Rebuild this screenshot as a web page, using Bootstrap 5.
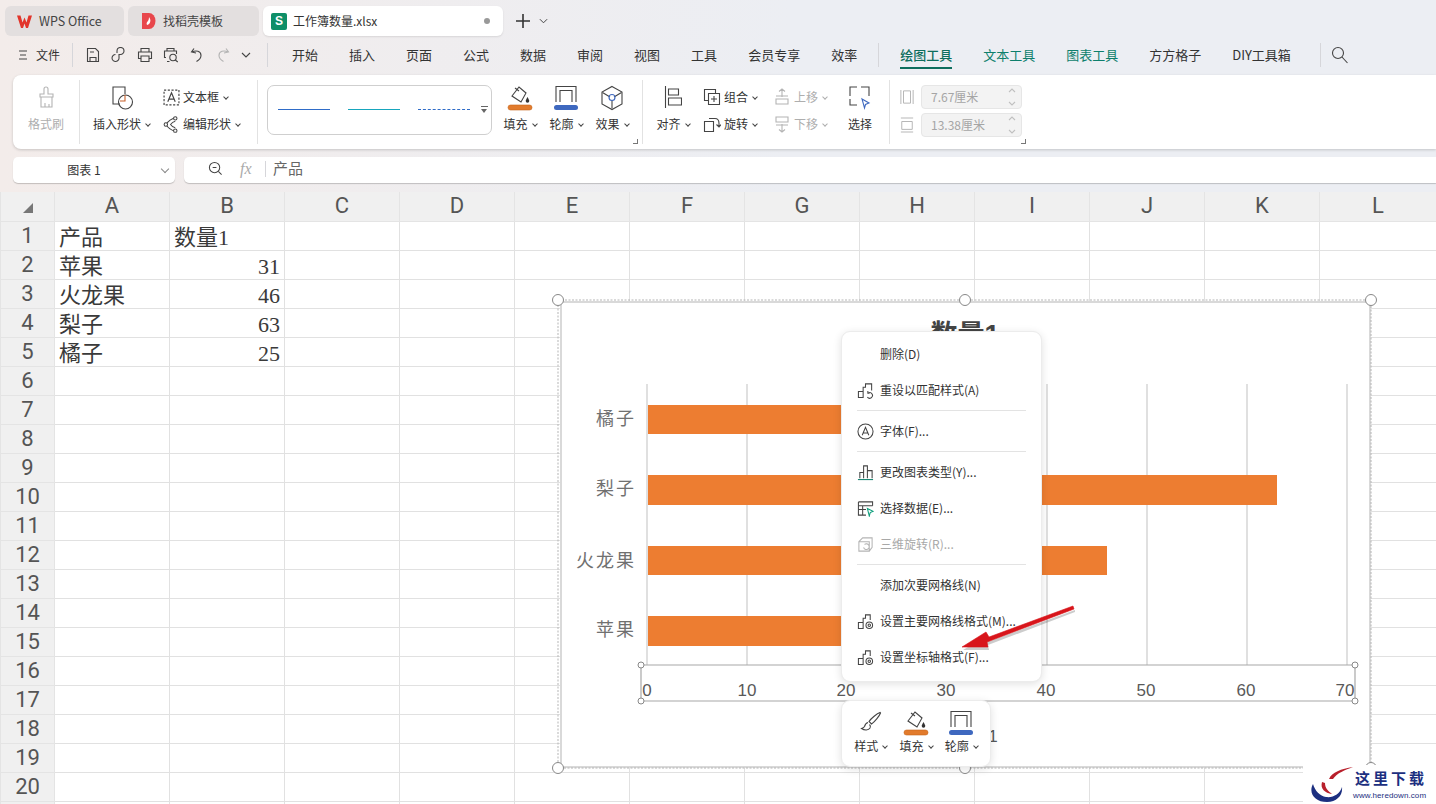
<!DOCTYPE html>
<html lang="zh-CN">
<head>
<meta charset="UTF-8">
<title>工作簿数量.xlsx - WPS Office</title>
<link href="https://cdn.jsdelivr.net/npm/bootstrap@5.3.3/dist/css/bootstrap.min.css" rel="stylesheet">
<style>
html, body { height: 100%; }
body { position: relative; width: 1436px; height: 804px; overflow: hidden; background: #fff; font-family: "Noto Sans CJK SC", "Liberation Sans", sans-serif; font-size: 12px; color: #333; }
.app-head { height: 192px; background: linear-gradient(90deg, #f3ecea, #eceef3 55%); }
.ic { fill: none; stroke: #444; stroke-width: 1.1; flex: none; }
.ic-off { stroke: #b4b4b4; }
.drop-mini { display: inline-block; width: 4px; height: 4px; border-right: 1px solid #444; border-bottom: 1px solid #444; transform: rotate(45deg); margin: -3px 0 0 5px; vertical-align: middle; flex: none; }

/* tabs */
.tab-bar { height: 40px; padding: 6px 0 4px 5px; gap: 4px; }
.doc-tab { height: 30px; border-radius: 6px; background: #e3dfdf; padding-left: 13px; gap: 7px; color: #444; }
.doc-tab.on { background: #fff; color: #333; box-shadow: 0 1px 2px rgba(0,0,0,.1); width: 240px; padding-left: 8px; gap: 6px; }
.tab-a { width: 119px; padding-left: 11px; gap: 6px; font-size: 12.500px; }
.tab-b { width: 131px; }
.sheet-badge { width: 16px; height: 17px; background: #0f8f68; color: #fff; border-radius: 2px; font: 700 12px/17px "Liberation Sans", sans-serif; text-align: center; }
.tab-dot { width: 6px; height: 6px; border-radius: 50%; background: #999; margin-left: auto; margin-right: 13px; }

/* menu */
.menu-row { height: 30px; margin-bottom: 5px; font-size: 13px; }
.menu-side { width: 268px; padding-left: 18px; }
.menu-file { font-size: 12px; }
.menu-sep { width: 1px; height: 24px; background: #d6d6da; flex: none; }
.qa-sep { margin-left: 12px; }
.qa-set { gap: 10px; margin-left: 12px; }
.menu-tab { color: #333; white-space: nowrap; position: relative; }
.menu-tabs { gap: 31px; padding-left: 24px; }
.menu-tab.teal { color: #0d7f6c; }
.menu-tab.cur { color: #0d6e5d; font-weight: 500; }
.menu-tab.cur::after { content: ""; position: absolute; left: 0; right: 0; bottom: -4px; height: 2px; background: #0d6e5d; }
.sep-tools { margin: 0 -10px; }
.sep-find { margin-left: -2px; }
.find-ic { margin-left: -21px; }

/* ribbon */
.ribbon { margin-left: 13px; height: 74px; background: #fff; border-radius: 8px 0 0 8px; box-shadow: 0 1px 3px rgba(0,0,0,.18); }
.rb-group { position: relative; height: 64px; margin-top: 5px; padding-top: 5px; border-right: 1px solid #e2e2e2; }
.rb-a { width: 67px; justify-content: center; }
.rb-b { width: 178px; padding-left: 13px; gap: 13px; }
.rb-c { width: 385px; padding-left: 9px; }
.rb-d { width: 247px; padding-left: 5px; }
.rb-e { border-right: 0; padding-left: 10px; width: 140px; }
.big-tool { height: 48px; width: 46px; align-items: center; justify-content: space-between; white-space: nowrap; }
.big-tool.wide { width: 57px; }
.big-tool.mid { width: 50px; }
.off { color: #aeaeae; }
.off .drop-mini { border-color: #aeaeae; }
.small-col { height: 51px; justify-content: space-between; }
.small-tool { height: 24px; gap: 3px; white-space: nowrap; }
.col-join { width: 70px; margin-left: 5px; }
.col-layer { width: 62px; }
.line-gallery { width: 225px; height: 50px; margin-right: 5px; border: 1px solid #cfcfcf; border-radius: 7px; position: relative; padding: 0 10px 2px; gap: 18px; }
.gal-line { display: block; flex: none; width: 52px; height: 1px; background: #2f6cc8; }
.gal-line.l2 { background: #17a6bd; }
.gal-line.l3 { height: 0; background: none; border-top: 1px dashed #2f6cc8; }
.gal-more { position: absolute; right: 3px; top: 20px; width: 7px; height: 8px; border-top: 1px solid #666; }
.gal-more::after { content: ""; position: absolute; left: 0; top: 2px; border: 3.500px solid transparent; border-top: 4px solid #666; }
.launch { position: absolute; right: 4px; bottom: 0; width: 5px; height: 5px; border-right: 1px solid #777; border-bottom: 1px solid #777; }
.rb-e .launch { right: auto; left: 131px; }
.size-row { height: 24px; gap: 7px; margin-bottom: 4px; }
.size-input { width: 101px; height: 24px; background: #f3f3f3; border: 1px solid #e6e6e6; border-radius: 4px; color: #a5a5a5; padding: 0 5px 0 9px; line-height: 22px; }
.spin-ic { stroke: #c0c0c0; }

/* formula */
.formula-row { margin-top: 8px; height: 26px; padding-left: 13px; gap: 9px; }
.name-box { width: 162px; background: #fff; border-radius: 5px; box-shadow: 0 1px 1px rgba(0,0,0,.2); position: relative; justify-content: center; padding-right: 20px; }
.name-box .drop-mini { position: absolute; right: 7px; top: 9px; width: 6px; height: 6px; margin: 0; border-color: #888; }
.formula-box { flex: 1; background: #fff; border-radius: 5px 0 0 5px; box-shadow: 0 1px 1px rgba(0,0,0,.2); padding: 0 0 3px 24px; font-size: 15px; color: #666; }
.fx-mark { font: italic 16px "Liberation Serif", serif; color: #aaa; margin-left: 17px; width: 25px; }
.fx-sep { height: 16px; margin-right: 7px; }

/* sheet */
.sheet-grid { table-layout: fixed; border-collapse: collapse; width: 1436px; }
.sheet-grid th, .sheet-grid td { height: 29px; padding: 0; border: 1px solid #e1e1e1; overflow: hidden; white-space: nowrap; }
.sheet-grid td { font: 22px/25px "Liberation Serif", "Noto Sans CJK SC", serif; color: #3a3a3a; padding: 3px 4px 0; }
.sheet-grid th { background: #f0f0f0; font: 400 22px/28px "Roboto", "Liberation Sans", sans-serif; color: #555; text-align: center; border-color: #e4e4e4; }
.sheet-grid thead th { border-top: 0; height: 29px; }
.col-head { width: 54px; }
.col-cell { width: 115px; }
.col-last { width: 117px; }
.corner-mark { display: inline-block; border: 5px solid transparent; border-right-color: #777; border-bottom-color: #777; margin-top: 8px; }

/* chart overlay */
.chart-layer { position: absolute; left: 552px; top: 292px; }
.chart-layer text { font-family: "Liberation Sans", "Noto Sans CJK SC", sans-serif; }
.ctx-menu { position: absolute; left: 841px; top: 331px; width: 201px; height: 351px; padding: 4px 0 7px; margin: 0; border: 1px solid #ececec; border-radius: 9px; box-shadow: 0 2px 8px rgba(0,0,0,.12); font-size: 12px; }
.ctx-menu .dropdown-item { height: 36px; padding: 0 0 0 15px; gap: 6px; color: #333; }
.ctx-menu .dropdown-item.disabled { color: #a8a8a8; }
.ctx-menu .dropdown-divider { margin: 2px 15px 2px 15px; border-color: #e3e3e3; }
.ic-gap { width: 17px; flex: none; }
.mini-bar { position: absolute; left: 841px; top: 700px; width: 150px; height: 67px; background: #fff; border: 1px solid #ececec; border-radius: 9px; box-shadow: 0 2px 8px rgba(0,0,0,.12); padding: 9px 6px 9px; }
.mini-bar .big-tool { height: 45px; }
.arrow-layer { position: absolute; left: 950px; top: 600px; z-index: 1001; }
.brand-box { position: absolute; left: 1303px; top: 765px; width: 133px; height: 39px; background: #fff; }
.brand-logo { position: absolute; left: 6px; top: 1px; }
.brand-name { position: absolute; left: 52px; top: 2px; font-size: 15px; line-height: 22px; font-weight: 700; color: #1c2f80; letter-spacing: 3px; white-space: nowrap; }
.brand-url { position: absolute; left: 50px; top: 26px; font: 8px/10px "Liberation Sans", sans-serif; color: #1c2f80; letter-spacing: .1px; }
</style>
</head>
<body>

<svg width="0" height="0" class="position-absolute">
  <defs>
    <symbol id="i-save" viewBox="0 0 16 16"><path d="M2.500 1.500h8l3 3v10h-11zM5 14.500v-4h6v4M5 5h4"/></symbol>
    <symbol id="i-link" viewBox="0 0 16 16"><path d="M6 6V4a3.500 3.500 0 1 1 3.500 3.500H8v3a3.500 3.500 0 1 1-3.500-3"/></symbol>
    <symbol id="i-print" viewBox="0 0 16 16"><path d="M4 5V1.500h8V5M4 11.500H1.500V5h13v6.500H12M4 9h8v5.500H4z"/></symbol>
    <symbol id="i-preview" viewBox="0 0 16 16"><path d="M4 4V1.500h7V4M3 10.500H1.500V4h12v3M6.500 14.500H4"/><circle cx="10" cy="10.500" r="3.200"/><path d="M12.300 13l2.500 2"/></symbol>
    <symbol id="i-undo" viewBox="0 0 16 16"><path d="M5 1.500 2.500 5 7 6M3 5c4-2 9-1 9 3.500 0 2.500-2 4.500-4.500 6"/></symbol>
    <symbol id="i-redo" viewBox="0 0 16 16"><path d="M11 1.500 13.500 5 9 6M13 5C9 3 4 4 4 8.500 4 11 6 13 8.500 14.500"/></symbol>
    <symbol id="i-down" viewBox="0 0 10 6"><path d="M1 1l4 4 4-4"/></symbol>
    <symbol id="i-spin" viewBox="0 0 8 20"><path d="M1 5l3-3 3 3M1 15l3 3 3-3"/></symbol>
    <symbol id="i-search" viewBox="0 0 18 18"><circle cx="7" cy="7" r="5.500"/><path d="M11 11l5.500 6"/></symbol>
    <symbol id="i-brush" viewBox="0 0 22 24"><path d="M9 9V4a2 2 0 0 1 4 0v5h5v3H5V9zM6 12v10h11V12M10 22v-4M14 22v-3"/></symbol>
    <symbol id="i-shape" viewBox="0 0 24 26"><path d="M15 9V2H3v17h7"/><circle cx="15.500" cy="17" r="7"/><path d="M15 10v6h-5" stroke="#c8602a"/></symbol>
    <symbol id="i-textbox" viewBox="0 0 16 16"><path d="M1 1h14v14H1z" stroke-dasharray="2 1.500"/><path d="M4.500 12 8 3.500l3.500 8.500M5.700 9.500h4.600"/></symbol>
    <symbol id="i-edit" viewBox="0 0 18 18"><path d="M13 2C7 3 5 6 3 9c2 3 4 6 10 7M13 5.500c-3 .5-4 2-5 3.500 1 1.500 2 3 5 3.500"/><g fill="#fff"><circle cx="13" cy="2.500" r="1.800"/><circle cx="3" cy="9" r="1.800"/><circle cx="13" cy="15.500" r="1.800"/></g></symbol>
    <symbol id="i-fill" viewBox="0 0 26 26"><path d="M5 11 12 2l7 6-5 9z"/><path d="M8 3l4 3"/><path d="M20.500 12c1 2 1.800 3 1.800 4a1.800 1.800 0 0 1-3.600 0c0-1 .8-2 1.800-4z" fill="#333" stroke="none"/><rect x="1" y="20" width="24" height="5" rx="2.500" fill="#e27b2c" stroke="#c8661d" stroke-width=".6"/></symbol>
    <symbol id="i-line" viewBox="0 0 26 26"><path d="M3 17V1.500h20V17M7 17V5.500h12V17"/><rect x="1" y="20" width="24" height="5" rx="2.500" fill="#3e68bf" stroke="none"/></symbol>
    <symbol id="i-effect" viewBox="0 0 24 26"><path d="M12 1.500 22 7v12l-10 5.500L2 19V7z"/><path d="M2.500 7.500 10 12M21.500 7.500 14 12M12 15.500v8"/><circle cx="12" cy="12.500" r="3" stroke="#3e68bf"/></symbol>
    <symbol id="i-align" viewBox="0 0 18 24"><path d="M1.500 1v22M4.500 4h10v6h-10zM4.500 13h13v7h-13z"/></symbol>
    <symbol id="i-group" viewBox="0 0 18 18"><path d="M1.500 5.500v-4h11v4M1.500 5.500v7h4M5.500 5.500h11v11h-11zM11 8v6M8 11h6"/></symbol>
    <symbol id="i-rotate" viewBox="0 0 18 18"><path d="M1.500 6.500h9v10h-9zM6 3.500h6c3 0 4 2 4 5v3M13.500 9.500l2.500 2.500 2-2.500"/></symbol>
    <symbol id="i-up" viewBox="0 0 18 18"><path d="M9 1v8M6 3.500 9 1l3 2.500M3 8h12M3 11h12v5H3z"/></symbol>
    <symbol id="i-dn" viewBox="0 0 18 18"><path d="M3 2h12v5H3zM3 10h12M9 9v8M6 14.500 9 17l3-2.500"/></symbol>
    <symbol id="i-select" viewBox="0 0 24 26"><path d="M9 2H2v9M13 2h8v9M2 14v6h7"/><path d="M14 14l7 4-3.500 1.500-1 3.500z" stroke="#3e68bf"/></symbol>
    <symbol id="i-width" viewBox="0 0 16 18"><path d="M1 1v16M15 1v16M4 2h8v14H4z"/></symbol>
    <symbol id="i-height" viewBox="0 0 16 18"><path d="M1 1h14M1 17h14M2 5h12v9H2z"/></symbol>
    <symbol id="i-zoom" viewBox="0 0 16 16"><circle cx="7" cy="7" r="5.500"/><path d="M11 11l3.500 3.500M5 7h4"/></symbol>
    <symbol id="i-chart" viewBox="0 0 18 18"><path d="M1.500 10h5v6.500h-5zM6.500 16.500V5.500H9V2h5v5.500"/><circle cx="13" cy="13" r="3.500"/><circle cx="13" cy="13" r="1.300"/></symbol>
    <symbol id="i-reset" viewBox="0 0 18 18"><path d="M1.500 10h5v6.500h-5zM6.500 16.500V5.500H9V2h6.500v7"/><path d="M11 16a3 3 0 1 0 1-4.500M11.500 9.500v2.300h2"/></symbol>
    <symbol id="i-font" viewBox="0 0 18 18"><circle cx="9" cy="9" r="8"/><path d="M5.500 13 9 4.500l3.500 8.500M6.700 10.500h4.600"/></symbol>
    <symbol id="i-type" viewBox="0 0 18 18"><path d="M3 15V9h4v6M7 15V2h4v13M11 15V7h5v8"/><path d="M1 16.500h16" stroke="#0d7f6c"/></symbol>
    <symbol id="i-data" viewBox="0 0 18 18"><path d="M1.500 2h15v4M1.500 2v14h8M1.500 6h15M1.500 10h8M6 6v10"/><path d="M11 9l6 3-3 1.300L13 17z" stroke="#0d9f7c"/></symbol>
    <symbol id="i-cube" viewBox="0 0 18 18"><path d="M2 6h11v10H2zM2 6l4-4h10v10l-3 4M8 9a3 3 0 1 1-1 3"/></symbol>
    <symbol id="i-pen" viewBox="0 0 24 24"><path d="M21 2.500c-3 1-9 6-11 9l2.500 2.500c3-2 8-8 9-11zM9 12.500c-2 .5-3 2-3.500 4-.5 1-1.500 1.500-3 2 3 2 7 2 8.500-.5.800-1.500.5-2.500-.5-3.500"/></symbol>
  </defs>
</svg>

<header class="app-head">
  <div class="tab-bar d-flex align-items-center">
    <div class="doc-tab tab-a d-flex align-items-center">
      <svg width="17" height="15" viewBox="0 0 17 15"><path d="M1 1.500h3.500l2 7 2-5 2 5 2-7H16l-4 12.500H10L8.500 9.500 7 14H5z" fill="#e2352b"/></svg>
      <span>WPS Office</span>
    </div>
    <div class="doc-tab tab-b d-flex align-items-center">
      <svg width="15" height="18" viewBox="0 0 15 18"><path d="M1 1h7a6.500 8 0 0 1 0 16H1z" fill="#e8474c"/><path d="M8 5c1 2 2 3 1 5.500C8.500 12 7 13 6 13c-1-2 0-3 1-4 .5-1 1-2 1-4z" fill="#fff"/></svg>
      <span>找稻壳模板</span>
    </div>
    <div class="doc-tab on d-flex align-items-center">
      <span class="sheet-badge">S</span>
      <span>工作簿数量.xlsx</span>
      <span class="tab-dot"></span>
    </div>
    <svg class="ms-2" width="16" height="16" viewBox="0 0 16 16"><path d="M8 1v14M1 8h14" stroke="#333" stroke-width="1.600" fill="none"/></svg>
    <svg class="ic ms-1" width="9" height="6"><use href="#i-down"/></svg>
  </div>

  <div class="menu-row d-flex align-items-center">
    <div class="menu-side d-flex align-items-center">
      <svg class="me-2" width="10" height="10" viewBox="0 0 10 10"><path d="M1 1h8M2 5h6M1 9h8" stroke="#444" fill="none"/></svg>
      <span class="menu-file">文件</span>
      <span class="menu-sep qa-sep"></span>
      <div class="qa-set d-flex align-items-center">
        <svg class="ic" width="16" height="16"><use href="#i-save"/></svg>
        <svg class="ic" width="16" height="16"><use href="#i-link"/></svg>
        <svg class="ic" width="16" height="16"><use href="#i-print"/></svg>
        <svg class="ic" width="16" height="16"><use href="#i-preview"/></svg>
        <svg class="ic" width="16" height="16"><use href="#i-undo"/></svg>
        <svg class="ic ic-off" width="16" height="16"><use href="#i-redo"/></svg>
        <svg class="ic" width="10" height="6"><use href="#i-down"/></svg>
      </div>
      <span class="menu-sep ms-auto"></span>
    </div>
    <nav class="menu-tabs d-flex align-items-center">
      <span class="menu-tab">开始</span><span class="menu-tab">插入</span><span class="menu-tab">页面</span><span class="menu-tab">公式</span><span class="menu-tab">数据</span><span class="menu-tab">审阅</span><span class="menu-tab">视图</span><span class="menu-tab">工具</span><span class="menu-tab">会员专享</span><span class="menu-tab">效率</span>
      <span class="menu-sep sep-tools"></span>
      <span class="menu-tab cur">绘图工具</span><span class="menu-tab teal">文本工具</span><span class="menu-tab teal">图表工具</span><span class="menu-tab">方方格子</span><span class="menu-tab">DIY工具箱</span>
      <span class="menu-sep sep-find"></span>
      <svg class="ic find-ic" width="18" height="18"><use href="#i-search"/></svg>
    </nav>
  </div>

  <section class="ribbon d-flex">
    <div class="rb-group rb-a d-flex">
      <div class="big-tool off d-flex flex-column"><svg class="ic ic-off" width="22" height="24"><use href="#i-brush"/></svg><span>格式刷</span></div>
    </div>
    <div class="rb-group rb-b d-flex">
      <div class="big-tool wide d-flex flex-column"><svg class="ic" width="24" height="26"><use href="#i-shape"/></svg><span>插入形状<i class="drop-mini"></i></span></div>
      <div class="small-col d-flex flex-column">
        <div class="small-tool d-flex align-items-center"><svg class="ic" width="17" height="17"><use href="#i-textbox"/></svg><span>文本框<i class="drop-mini"></i></span></div>
        <div class="small-tool d-flex align-items-center"><svg class="ic" width="17" height="17"><use href="#i-edit"/></svg><span>编辑形状<i class="drop-mini"></i></span></div>
      </div>
    </div>
    <div class="rb-group rb-c d-flex">
      <div class="line-gallery d-flex align-items-center"><span class="gal-line"></span><span class="gal-line l2"></span><span class="gal-line l3"></span><span class="gal-more"></span></div>
      <div class="big-tool d-flex flex-column"><svg class="ic" width="26" height="26"><use href="#i-fill"/></svg><span>填充<i class="drop-mini"></i></span></div>
      <div class="big-tool d-flex flex-column"><svg class="ic" width="26" height="26"><use href="#i-line"/></svg><span>轮廓<i class="drop-mini"></i></span></div>
      <div class="big-tool d-flex flex-column"><svg class="ic" width="24" height="26"><use href="#i-effect"/></svg><span>效果<i class="drop-mini"></i></span></div>
      <span class="launch"></span>
    </div>
    <div class="rb-group rb-d d-flex">
      <div class="big-tool mid d-flex flex-column"><svg class="ic" width="18" height="24"><use href="#i-align"/></svg><span>对齐<i class="drop-mini"></i></span></div>
      <div class="small-col col-join d-flex flex-column">
        <div class="small-tool d-flex align-items-center"><svg class="ic" width="18" height="18"><use href="#i-group"/></svg><span>组合<i class="drop-mini"></i></span></div>
        <div class="small-tool d-flex align-items-center"><svg class="ic" width="18" height="18"><use href="#i-rotate"/></svg><span>旋转<i class="drop-mini"></i></span></div>
      </div>
      <div class="small-col col-layer off d-flex flex-column">
        <div class="small-tool d-flex align-items-center"><svg class="ic ic-off" width="18" height="18"><use href="#i-up"/></svg><span>上移<i class="drop-mini"></i></span></div>
        <div class="small-tool d-flex align-items-center"><svg class="ic ic-off" width="18" height="18"><use href="#i-dn"/></svg><span>下移<i class="drop-mini"></i></span></div>
      </div>
      <div class="big-tool mid d-flex flex-column"><svg class="ic" width="24" height="26"><use href="#i-select"/></svg><span>选择</span></div>
    </div>
    <div class="rb-group rb-e">
      <div class="size-row d-flex align-items-center"><svg class="ic ic-off" width="14" height="18"><use href="#i-width"/></svg><div class="size-input d-flex align-items-center justify-content-between"><span>7.67厘米</span><svg class="ic spin-ic" width="8" height="20"><use href="#i-spin"/></svg></div></div>
      <div class="size-row d-flex align-items-center"><svg class="ic ic-off" width="14" height="18"><use href="#i-height"/></svg><div class="size-input d-flex align-items-center justify-content-between"><span>13.38厘米</span><svg class="ic spin-ic" width="8" height="20"><use href="#i-spin"/></svg></div></div>
      <span class="launch"></span>
    </div>
  </section>

  <div class="formula-row d-flex">
    <div class="name-box d-flex align-items-center">图表 1<i class="drop-mini"></i></div>
    <div class="formula-box d-flex align-items-center">
      <svg class="ic" width="15" height="15"><use href="#i-zoom"/></svg>
      <span class="fx-mark">fx</span>
      <span class="menu-sep fx-sep"></span>
      <span>产品</span>
    </div>
  </div>
</header>

<table class="sheet-grid">
  <colgroup id="sheetCols"></colgroup>
  <thead><tr id="sheetHead"></tr></thead>
  <tbody id="sheetBody"></tbody>
</table>

<svg class="chart-layer" width="828" height="484" viewBox="552 292 828 484">
  <rect x="561" y="302" width="809" height="465" fill="#fff" stroke="#d9d9d9" stroke-width="2"/>
  <rect x="558" y="300" width="813" height="468" fill="none" stroke="#b5b5b5" stroke-dasharray="2 1.500"/>
  <g stroke="#e0e0e0" stroke-width="2">
    <path d="M647 384V665M747 384V665M847 384V665M947 384V665M1047 384V665M1147 384V665M1247 384V665M1347 384V665"/>
  </g>
  <g fill="#ed7d31">
    <rect x="648" y="405" width="250" height="29"/>
    <rect x="648" y="475" width="629" height="30"/>
    <rect x="648" y="546" width="459" height="29"/>
    <rect x="648" y="616" width="310" height="30"/>
  </g>
  <text x="965" y="344" text-anchor="middle" font-size="27" font-weight="700" fill="#444">数量1</text>
  <g font-size="18" fill="#707070" text-anchor="end" letter-spacing="2">
    <text x="636" y="425">橘子</text>
    <text x="636" y="495">梨子</text>
    <text x="636" y="567">火龙果</text>
    <text x="636" y="636">苹果</text>
  </g>
  <path d="M641 665H1355V701H641z" fill="none" stroke="#a8a8a8" stroke-width="1.200"/>
  <g font-size="17" fill="#595959" text-anchor="middle">
    <text x="647" y="696">0</text><text x="747" y="696">10</text><text x="846" y="696">20</text><text x="946" y="696">30</text><text x="1046" y="696">40</text><text x="1146" y="696">50</text><text x="1246" y="696">60</text><text x="1345" y="696">70</text>
  </g>
  <text x="993" y="742" font-size="17" fill="#595959" text-anchor="middle">1</text>
  <g fill="#fff" stroke="#888">
    <circle cx="641" cy="665" r="3"/><circle cx="1355" cy="665" r="3"/><circle cx="641" cy="701" r="3"/><circle cx="1355" cy="701" r="3"/>
    <circle cx="558" cy="300" r="5.500"/><circle cx="965" cy="300" r="5.500"/><circle cx="1371" cy="300" r="5.500"/><circle cx="558" cy="768" r="5.500"/><circle cx="965" cy="768" r="5.500"/><circle cx="1371" cy="768" r="5.500"/>
  </g>
</svg>

<ul class="ctx-menu dropdown-menu show list-unstyled">
  <li><a class="dropdown-item d-flex align-items-center"><span class="ic-gap"></span>删除(D)</a></li>
  <li><a class="dropdown-item d-flex align-items-center"><svg class="ic" width="17" height="17"><use href="#i-reset"/></svg>重设以匹配样式(A)</a></li>
  <li><hr class="dropdown-divider"></li>
  <li><a class="dropdown-item d-flex align-items-center"><svg class="ic" width="17" height="17"><use href="#i-font"/></svg>字体(F)...</a></li>
  <li><hr class="dropdown-divider"></li>
  <li><a class="dropdown-item d-flex align-items-center"><svg class="ic" width="17" height="17"><use href="#i-type"/></svg>更改图表类型(Y)...</a></li>
  <li><a class="dropdown-item d-flex align-items-center"><svg class="ic" width="17" height="17"><use href="#i-data"/></svg>选择数据(E)...</a></li>
  <li><a class="dropdown-item disabled d-flex align-items-center"><svg class="ic ic-off" width="17" height="17"><use href="#i-cube"/></svg>三维旋转(R)...</a></li>
  <li><hr class="dropdown-divider"></li>
  <li><a class="dropdown-item d-flex align-items-center"><span class="ic-gap"></span>添加次要网格线(N)</a></li>
  <li><a class="dropdown-item d-flex align-items-center"><svg class="ic" width="17" height="17"><use href="#i-chart"/></svg>设置主要网格线格式(M)...</a></li>
  <li><a class="dropdown-item d-flex align-items-center"><svg class="ic" width="17" height="17"><use href="#i-chart"/></svg>设置坐标轴格式(F)...</a></li>
</ul>

<div class="mini-bar d-flex justify-content-between">
  <div class="big-tool d-flex flex-column"><svg class="ic" width="24" height="24"><use href="#i-pen"/></svg><span>样式<i class="drop-mini"></i></span></div>
  <div class="big-tool d-flex flex-column"><svg class="ic" width="26" height="26"><use href="#i-fill"/></svg><span>填充<i class="drop-mini"></i></span></div>
  <div class="big-tool d-flex flex-column"><svg class="ic" width="26" height="26"><use href="#i-line"/></svg><span>轮廓<i class="drop-mini"></i></span></div>
</div>

<svg class="arrow-layer" width="130" height="60" viewBox="950 600 130 60">
  <path d="M1074 608 989 639l-3-5-24 14 26 0-1-5 87-33z" fill="rgba(0,0,0,.2)" transform="translate(1 2)"/>
  <path d="M1073 606 989 637l-3-5-24 15 26 0-1-5 87-33z" fill="#d8151b" stroke="#d8151b" stroke-width=".6" stroke-linejoin="round"/>
</svg>

<div class="brand-box">
  <svg class="brand-logo" width="46" height="38" viewBox="0 0 46 38">
    <path d="M4 18c-5 9 2 18 14 18 10 0 16-7 15-15-2 7-9 11-16 10C11 30 6 25 4 18z" fill="#1c2f80"/>
    <path d="M13 16c-2 7 3 11 10 12-4-3-7-6-7-11z" fill="#b8202c"/>
    <path d="M20 13c3-7 12-10 24-12-8 3-16 6-20 12z" fill="#b8202c"/>
  </svg>
  <span class="brand-name">这里下载</span>
  <span class="brand-url">www.heredown.com</span>
</div>

<script>
  // build the empty grid, only the first rows hold data
  const letras = ["A","B","C","D","E","F","G","H","I","J","K","L"];
  const datos = [["产品","数量1"],["苹果",31],["火龙果",46],["梨子",63],["橘子",25]];
  let cols = '<col class="col-head">';
  let head = '<th><span class="corner-mark"></span></th>';
  letras.forEach((l, i) => {
    cols += `<col class="${i === 11 ? "col-last" : "col-cell"}">`;
    head += `<th>${l}</th>`;
  });
  document.getElementById("sheetCols").innerHTML = cols;
  document.getElementById("sheetHead").innerHTML = head;
  let filas = "";
  for (let i = 0; i < 21; i++) {
    const d = datos[i] || [];
    filas += `<tr><th>${i < 20 ? i + 1 : ""}</th><td>${d[0] ?? ""}</td><td class="${typeof d[1] === "number" ? "text-end" : ""}">${d[1] ?? ""}</td>`;
    filas += "<td></td>".repeat(10) + "</tr>";
  }
  document.getElementById("sheetBody").innerHTML = filas;
</script>
<script src="https://cdn.jsdelivr.net/npm/bootstrap@5.3.3/dist/js/bootstrap.bundle.min.js"></script>
</body>
</html>
